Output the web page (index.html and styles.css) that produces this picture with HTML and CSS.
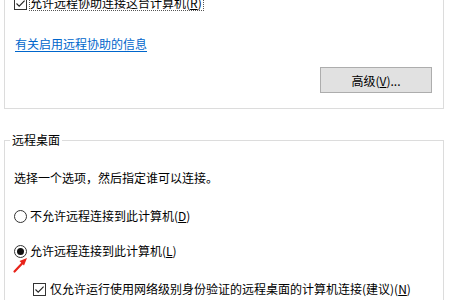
FILE: index.html
```html
<!DOCTYPE html>
<html lang="zh-CN">
<head>
<meta charset="utf-8">
<link rel="stylesheet" href="styles.css">
</head>
<body>
<div class="page">
  <section class="group assist">
    <label class="option check-row">
      <span class="box"><svg viewBox="0 0 13 13" width="13" height="13"><path d="M2.5 6.5 L5.2 9.2 L10.6 3.6" fill="none" stroke="#222" stroke-width="1.1"/></svg></span>
      <span class="focus">允许远程协助连接这台计算机(<u>R</u>)</span>
    </label>
    <a class="link" href="#">有关启用远程协助的信息</a>
    <div class="actions"><button class="btn">高级(<u>V</u>)...</button></div>
  </section>
  <fieldset class="group desktop">
    <legend>远程桌面</legend>
    <p class="hint">选择一个选项，然后指定谁可以连接。</p>
    <label class="option radio-row r1"><span class="radio"></span><span>不允许远程连接到此计算机(<u>D</u>)</span></label>
    <label class="option radio-row r2"><span class="radio on"><span class="dot"></span></span><span>允许远程连接到此计算机(<u>L</u>)</span>
      <svg class="arrow" viewBox="0 0 18 19" width="18" height="19"><path d="M2.5 16.5 L11 7.5" stroke="#e8231a" stroke-width="2.2" stroke-linecap="round" fill="none"/><path d="M15 3 L7.5 6 L12 10.5 Z" fill="#e8231a"/></svg>
    </label>
    <label class="option check-row sub">
      <span class="box"><svg viewBox="0 0 13 13" width="13" height="13"><path d="M2.5 6.5 L5.2 9.2 L10.6 3.6" fill="none" stroke="#222" stroke-width="1.1"/></svg></span>
      <span>仅允许运行使用网络级别身份验证的远程桌面的计算机连接(建议)(<u>N</u>)</span>
    </label>
  </fieldset>
</div>
</body>
</html>
```

FILE: styles.css
```css
html, body {
  margin: 0;
  padding: 0;
  background: #ffffff;
}
body {
  font-family: "Noto Sans CJK SC", "Noto Sans", sans-serif;
  font-size: 12px;
  line-height: 16px;
  color: #000000;
  overflow: hidden;
  width: 450px;
  height: 300px;
}
.page {
  display: flex;
  flex-direction: column;
  align-items: stretch;
  width: 450px;
}
.group {
  box-sizing: border-box;
  width: 440px;
  margin: 0 0 0 4px;
  border: 1px solid #dcdcdc;
}
.assist {
  border-top: none;
  margin-top: -16px;
  padding: 11px 11px 15px 9px;
  display: flex;
  flex-direction: column;
  align-items: flex-start;
}
.option {
  display: flex;
  align-items: center;
  height: 16px;
}
.box {
  box-sizing: border-box;
  width: 13px;
  height: 13px;
  border: 1px solid #333333;
  background: #ffffff;
  display: flex;
  align-items: center;
  justify-content: center;
  margin-right: 3px;
  flex: none;
}
.box svg {
  display: block;
  flex: none;
}
.focus {
  box-sizing: border-box;
  height: 16px;
  line-height: 14px;
  border: 1px dotted #555555;
  padding: 0 1px 0 0;
  margin-left: -1px;
}
.link {
  margin-top: 25px;
  color: #0066cc;
  text-decoration: underline;
  text-underline-offset: 2px;
  margin-left: 1px;
}
.actions {
  align-self: stretch;
  display: flex;
  justify-content: flex-end;
  margin-top: 15px;
}
.btn {
  box-sizing: border-box;
  width: 112px;
  height: 26px;
  background: #e1e1e1;
  border: 1px solid #adadad;
  font-family: inherit;
  font-size: 12px;
  color: #000000;
  padding: 0;
  border-radius: 0;
}
.desktop {
  margin-top: 23px;
  padding: 0 11px 40px 9px;
  min-width: 0;
}
.desktop legend {
  padding: 0 2px;
  margin-left: -4px;
  line-height: 16px;
  color: #000000;
}
.hint {
  margin: 22px 0 0 0;
}
.r1 {
  margin-top: 22px;
}
.r2 {
  margin-top: 19px;
  position: relative;
}
.sub {
  margin-top: 22px;
  margin-left: 19px;
}
.sub .box {
  margin-right: 4px;
}
.radio {
  box-sizing: border-box;
  width: 13px;
  height: 13px;
  border: 1px solid #333333;
  border-radius: 50%;
  background: #ffffff;
  margin-right: 3px;
  display: flex;
  align-items: center;
  justify-content: center;
  flex: none;
}
.radio .dot {
  width: 7px;
  height: 7px;
  border-radius: 50%;
  background: #111111;
}
.arrow {
  position: absolute;
  left: -2px;
  top: 12px;
}
u {
  text-decoration: underline;
  text-underline-offset: 1px;
}
```
